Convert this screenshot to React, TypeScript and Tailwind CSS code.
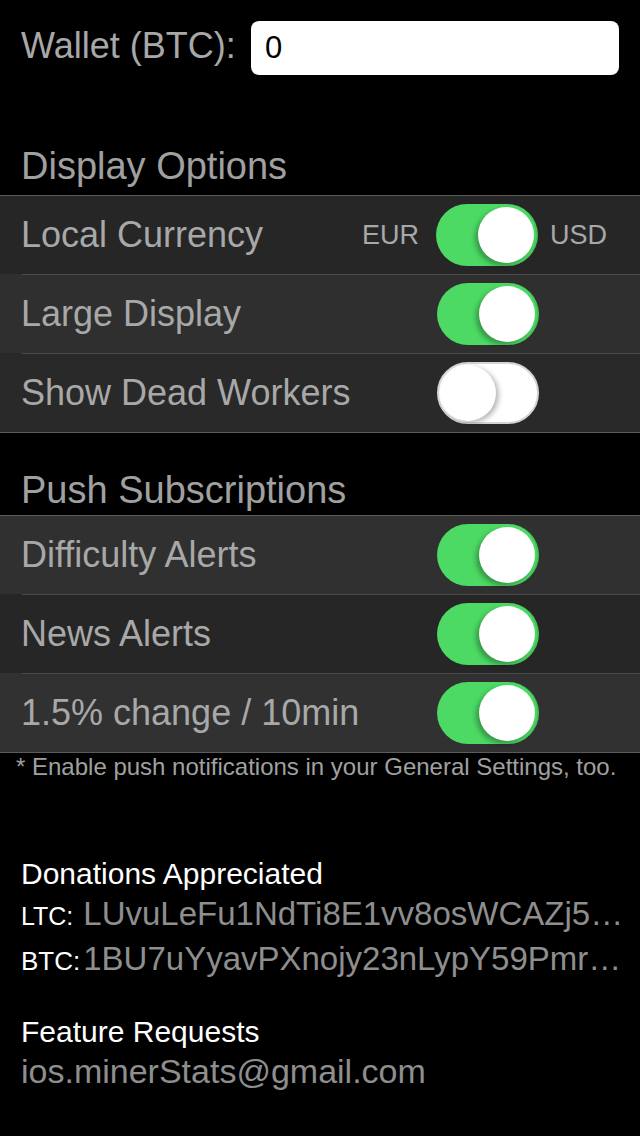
import React from 'react';

type Row = { label: string; on: boolean; bg: string; currency?: boolean };

const displayRows: Row[] = [
  { label: 'Local Currency', on: true, bg: 'bg-[#262626]', currency: true },
  { label: 'Large Display', on: true, bg: 'bg-[#2f2f2f]' },
  { label: 'Show Dead Workers', on: false, bg: 'bg-[#292929]' },
];

const pushRows: Row[] = [
  { label: 'Difficulty Alerts', on: true, bg: 'bg-[#303030]' },
  { label: 'News Alerts', on: true, bg: 'bg-[#262626]' },
  { label: '1.5% change / 10min', on: true, bg: 'bg-[#313131]' },
];

const Toggle: React.FC<{ on: boolean }> = ({ on }) =>
  on ? (
    <div className="relative w-[102px] h-[62px] rounded-full bg-[#4cd964] border-r-[2px] border-[#44c35a] shrink-0">
      <div className="absolute right-[2px] top-[3px] w-[56px] h-[56px] rounded-full bg-white shadow-[-3px_3px_5px_rgba(0,0,0,0.3)]" />
    </div>
  ) : (
    <div className="relative w-[102px] h-[62px] rounded-full bg-white border-[2px] border-[#d4d4d4] shrink-0">
      <div className="absolute left-[1px] top-[1px] w-[56px] h-[56px] rounded-full bg-white shadow-[3px_2px_5px_rgba(0,0,0,0.28)]" />
    </div>
  );

const Section: React.FC<{ rows: Row[] }> = ({ rows }) => (
  <div className="border-y border-[#5c5c5c]">
    {rows.map((r, i) => (
      <div key={r.label} className={r.bg}>
        {i > 0 && <div className="ml-[22px] h-px bg-[#4a4a4a]" />}
        <div className="flex items-center h-[78px] pl-[21px]">
          <span className="flex-1 text-[36px] leading-none text-[#a8a8a8] whitespace-nowrap">{r.label}</span>
          {r.currency ? (
            <div className="flex items-center pr-[33px]">
              <span className="text-[27px] leading-none text-[#a8a8a8] mr-[17px]">EUR</span>
              <Toggle on={r.on} />
              <span className="text-[27px] leading-none text-[#a8a8a8] ml-[12px]">USD</span>
            </div>
          ) : (
            <div className="pr-[101px]">
              <Toggle on={r.on} />
            </div>
          )}
        </div>
      </div>
    ))}
  </div>
);

export default function App() {
  return (
    <div className="w-[640px] min-h-[1136px] bg-black font-['Liberation_Sans',Arial,sans-serif] overflow-hidden">
      <div className="flex items-center h-[75px] pt-[21px] pl-[21px] pr-[21px]">
        <span className="text-[36px] leading-none text-[#a8a8a8] mb-[4px] whitespace-nowrap">Wallet (BTC):</span>
        <div className="ml-auto w-[368px] h-[54px] rounded-[8px] bg-white flex items-center pl-[14px] text-[31px] text-black">
          0
        </div>
      </div>

      <div className="h-[120px] flex items-end pl-[21px] pb-[10px]">
        <span className="text-[38px] leading-[38px] text-[#a0a0a0]">Display Options</span>
      </div>
      <Section rows={displayRows} />

      <div className="h-[82px] flex items-end pl-[21px] pb-[6px]">
        <span className="text-[38px] leading-[38px] text-[#a0a0a0]">Push Subscriptions</span>
      </div>
      <Section rows={pushRows} />

      <p className="mt-[2px] pl-[16px] text-[24px] leading-[24px] text-[#a0a0a0] whitespace-nowrap">
        * Enable push notifications in your General Settings, too.
      </p>

      <div className="pl-[21px]">
        <p className="mt-[80px] text-[30px] leading-[30px] text-white">Donations Appreciated</p>
        <div className="mt-[7px] flex items-baseline h-[36px] leading-[36px] whitespace-nowrap overflow-hidden">
          <span className="text-[25px] text-white mr-[10px]">LTC:</span>
          <span className="text-[33px] text-[#8e8e8e]">LUvuLeFu1NdTi8E1vv8osWCAZj5…</span>
        </div>
        <div className="mt-[9px] flex items-baseline h-[36px] leading-[36px] whitespace-nowrap overflow-hidden">
          <span className="text-[26px] text-white mr-[3px]">BTC:</span>
          <span className="text-[33px] text-[#8e8e8e]">1BU7uYyavPXnojy23nLypY59Pmr…</span>
        </div>
        <p className="mt-[40px] text-[30px] leading-[30px] text-white">Feature Requests</p>
        <p className="mt-[7px] text-[34px] leading-[34px] text-[#8e8e8e]">ios.minerStats@gmail.com</p>
      </div>
    </div>
  );
}
